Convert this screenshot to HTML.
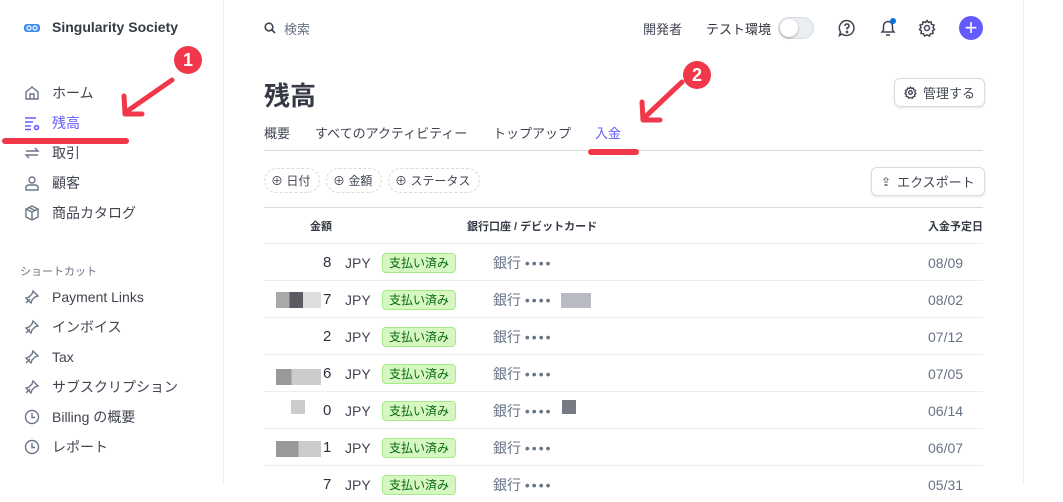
<!DOCTYPE html>
<html><head><meta charset="utf-8"><style>
*{margin:0;padding:0;box-sizing:border-box}
body{width:1063px;height:485px;overflow:hidden;background:#fff;font-family:"Liberation Sans","Noto Sans CJK JP",sans-serif;color:#30313d;position:relative}
.abs{position:absolute}
.side{left:0;top:0;width:224px;height:485px;border-right:1px solid #ebeef1}
.nav{position:absolute;left:24px;font-size:14px;display:flex;align-items:center;gap:12px;color:#414552;height:16px;line-height:16px}
.nav svg{width:16px;height:16px;flex:none}
.t{position:absolute;font-size:14px;color:#414552;white-space:nowrap}
.chip{position:absolute;top:168px;height:25px;border:1px dashed #d5dbe1;border-radius:13px;font-size:12px;color:#414552;display:flex;align-items:center;padding:0 9px 0 6px;gap:5px}
.btn{position:absolute;border:1px solid #d5dbe1;border-radius:6px;box-shadow:0 1px 2px rgba(0,0,0,.1);font-size:13px;display:flex;align-items:center;gap:6px;padding:0 9px;height:29px;color:#414552}
.row{position:absolute;left:264px;width:719px;height:37px;border-top:1px solid #ebeef1;font-size:14px;color:#414552}
.row span{line-height:18px}
.badge{position:absolute;left:118px;top:9px;background:#d7f7c2;border:1px solid #a6eb84;color:#05690d;font-size:12px;border-radius:4px;padding:0 6px;height:20px;line-height:18px!important}
.gray{position:absolute}
.dots{letter-spacing:2px}
</style></head><body>
<div class="abs side"></div>
<svg class="abs" style="left:24px;top:23px" width="16" height="10" viewBox="0 0 16 10"><rect x="0" y="1" width="16" height="8" rx="3" fill="#3d8ef0"/><circle cx="5" cy="5" r="2" fill="none" stroke="#fff" stroke-width="1.2"/><circle cx="11" cy="5" r="2" fill="none" stroke="#fff" stroke-width="1.2"/></svg>
<div class="t" style="left:52px;top:19px;font-weight:bold;color:#353a44;font-size:14px">Singularity Society</div>

<div class="nav" style="top:85px"><svg viewBox="0 0 16 16" fill="none" stroke="#6c7688" stroke-width="1.4"><path d="M2 7 L8 2 L14 7 V14 H2Z M6 14 V9 H10 V14"/></svg>ホーム</div>
<div class="nav" style="top:115px;color:#635bff"><svg viewBox="0 0 16 16" fill="none" stroke="#635bff" stroke-width="1.5"><path d="M1 3H12M1 7H9M1 11H7M1 14.5H7"/><circle cx="12.5" cy="12.5" r="2"/></svg>残高</div>
<div class="nav" style="top:145px"><svg viewBox="0 0 16 16" fill="none" stroke="#6c7688" stroke-width="1.4"><path d="M2 6H14L11 3M14 10H2L5 13"/></svg>取引</div>
<div class="nav" style="top:175px"><svg viewBox="0 0 16 16" fill="none" stroke="#6c7688" stroke-width="1.4"><circle cx="8" cy="5" r="3"/><path d="M2 15V13Q2 10 5 10H11Q14 10 14 13V15Z"/></svg>顧客</div>
<div class="nav" style="top:205px"><svg viewBox="0 0 16 16" fill="none" stroke="#6c7688" stroke-width="1.4"><path d="M8 1L14 4V12L8 15L2 12V4Z M2 4L8 7L14 4M8 7V15M5 2.5L11 5.5"/></svg>商品カタログ</div>
<div class="t" style="left:20px;top:263px;font-size:11px;color:#687385">ショートカット</div>
<div class="nav" style="top:289px"><svg viewBox="0 0 16 16" fill="none" stroke="#6c7688" stroke-width="1.4"><path d="M2 14L6 10M9 2L14 7L11 8L8 11L7 14L2 9L5 8L8 5Z"/></svg>Payment Links</div>
<div class="nav" style="top:319px"><svg viewBox="0 0 16 16" fill="none" stroke="#6c7688" stroke-width="1.4"><path d="M2 14L6 10M9 2L14 7L11 8L8 11L7 14L2 9L5 8L8 5Z"/></svg>インボイス</div>
<div class="nav" style="top:349px"><svg viewBox="0 0 16 16" fill="none" stroke="#6c7688" stroke-width="1.4"><path d="M2 14L6 10M9 2L14 7L11 8L8 11L7 14L2 9L5 8L8 5Z"/></svg>Tax</div>
<div class="nav" style="top:379px"><svg viewBox="0 0 16 16" fill="none" stroke="#6c7688" stroke-width="1.4"><path d="M2 14L6 10M9 2L14 7L11 8L8 11L7 14L2 9L5 8L8 5Z"/></svg>サブスクリプション</div>
<div class="nav" style="top:409px"><svg viewBox="0 0 16 16" fill="none" stroke="#6c7688" stroke-width="1.4"><circle cx="8" cy="8" r="6.5"/><path d="M8 4V8.5H11"/></svg>Billing の概要</div>
<div class="nav" style="top:439px"><svg viewBox="0 0 16 16" fill="none" stroke="#6c7688" stroke-width="1.4"><circle cx="8" cy="8" r="6.5"/><path d="M8 4V8.5H11"/></svg>レポート</div>

<div class="abs" style="left:2px;top:138px;width:127px;height:6px;border-radius:3px;background:#f0384a"></div>
<div class="abs" style="left:174px;top:46px;width:28px;height:28px;border-radius:50%;background:#f0384a;color:#fff;font-weight:bold;font-size:18px;text-align:center;line-height:28px">1</div>
<svg class="abs" style="left:118px;top:76px" width="60" height="45"><path d="M54 4L8 36M6 20L7 38L24 38" fill="none" stroke="#f0384a" stroke-width="5" stroke-linecap="round" stroke-linejoin="round"/></svg>

<svg class="abs" style="left:264px;top:22px" width="12" height="12" viewBox="0 0 12 12" fill="none" stroke="#414552" stroke-width="1.6"><circle cx="5" cy="5" r="3.8"/><path d="M8 8L11 11"/></svg>
<div class="t" style="left:284px;top:19px;font-size:13px;color:#687385">検索</div>
<div class="t" style="left:643px;top:19px;font-size:13px">開発者</div>
<div class="t" style="left:706px;top:19px;font-size:13px;color:#30313d">テスト環境</div>
<div class="abs" style="left:778px;top:17px;width:36px;height:22px;border-radius:11px;background:#ebeef1;border:1px solid #d5dbe1"><div style="position:absolute;left:1px;top:1px;width:18px;height:18px;border-radius:50%;background:#fff;box-shadow:0 1px 2px rgba(0,0,0,.3)"></div></div>
<svg class="abs" style="left:838px;top:19px" width="18" height="18" viewBox="0 0 18 18" fill="none" stroke="#414552" stroke-width="1.5"><path d="M9 1.5A7.5 7.5 0 1 1 4 15L1.5 16.5L2.5 13A7.5 7.5 0 0 1 9 1.5Z"/><path d="M7 7Q7 5 9 5Q11 5 11 7Q11 8.5 9 9V10.5"/><circle cx="9" cy="13" r=".6" fill="#414552"/></svg>
<svg class="abs" style="left:879px;top:18px" width="18" height="20" viewBox="0 0 18 20" fill="none" stroke="#414552" stroke-width="1.5"><path d="M3 14H15L13.5 12V8A4.5 4.5 0 0 0 4.5 8V12Z M7 17H11"/></svg>
<div class="abs" style="left:890px;top:18px;width:6px;height:6px;border-radius:50%;background:#0570de"></div>
<svg class="abs" style="left:918px;top:19px" width="18" height="18" viewBox="0 0 18 18" fill="none" stroke="#414552" stroke-width="1.5"><circle cx="9" cy="9" r="2.5"/><path d="M9 1.5L10.5 3.5L13 2.8L13.5 5.3L16 6L15 8.5L16.5 10.5L14.5 12L15 14.5L12.5 14.8L11.5 17L9 15.8L6.5 17L5.5 14.8L3 14.5L3.5 12L1.5 10.5L3 8.5L2 6L4.5 5.3L5 2.8L7.5 3.5Z"/></svg>
<div class="abs" style="left:959px;top:16px;width:24px;height:24px;border-radius:50%;background:#635bff;color:#fff;font-size:22px;line-height:23px;text-align:center">+</div>
<div class="abs" style="left:1023px;top:0;width:1px;height:485px;background:#ebeef1"></div>

<div class="t" style="left:264px;top:76px;font-size:26px;font-weight:bold;color:#353a44">残高</div>
<div class="btn" style="left:894px;top:78px"><svg width="13" height="13" viewBox="0 0 18 18" fill="none" stroke="#414552" stroke-width="1.8"><circle cx="9" cy="9" r="2.5"/><path d="M9 1.5L10.5 3.5L13 2.8L13.5 5.3L16 6L15 8.5L16.5 10.5L14.5 12L15 14.5L12.5 14.8L11.5 17L9 15.8L6.5 17L5.5 14.8L3 14.5L3.5 12L1.5 10.5L3 8.5L2 6L4.5 5.3L5 2.8L7.5 3.5Z"/></svg>管理する</div>
<div class="t" style="left:264px;top:123px;font-size:13px">概要</div>
<div class="t" style="left:315px;top:123px;font-size:13px">すべてのアクティビティー</div>
<div class="t" style="left:493px;top:123px;font-size:13px">トップアップ</div>
<div class="t" style="left:595px;top:123px;font-size:13px;color:#635bff">入金</div>
<div class="abs" style="left:264px;top:150px;width:719px;height:1px;background:#d5dbe1"></div>
<div class="abs" style="left:588px;top:149px;width:51px;height:6px;border-radius:3px;background:#f0384a"></div>
<div class="abs" style="left:683px;top:61px;width:28px;height:28px;border-radius:50%;background:#f0384a;color:#fff;font-weight:bold;font-size:18px;text-align:center;line-height:28px">2</div>
<svg class="abs" style="left:632px;top:76px" width="60" height="50"><path d="M50 6L12 42M10 26L11 44L28 44" fill="none" stroke="#f0384a" stroke-width="5" stroke-linecap="round" stroke-linejoin="round"/></svg>

<div class="chip" style="left:264px">⊕ 日付</div>
<div class="chip" style="left:326px">⊕ 金額</div>
<div class="chip" style="left:388px">⊕ ステータス</div>
<div class="btn" style="left:871px;top:167px;height:29px"><span style="font-size:12px">⇪</span>エクスポート</div>
<div class="abs" style="left:264px;top:207px;width:719px;height:1px;background:#d5dbe1"></div>
<div class="t" style="left:310px;top:218px;font-size:11px;font-weight:bold;color:#353a44">金額</div>
<div class="t" style="left:467px;top:218px;font-size:11px;font-weight:bold;color:#353a44">銀行口座 / デビットカード</div>
<div class="t" style="left:928px;top:218px;font-size:11px;font-weight:bold;color:#353a44">入金予定日</div>

<div class="row" style="top:243px"><span class="abs" style="left:59px;top:10px;font-size:15px;color:#30313d">8</span><span class="abs" style="left:81px;top:10px">JPY</span><span class="badge">支払い済み</span><span class="abs" style="left:229px;top:10px;color:#687385">銀行 <span class="dots">••••</span></span><span class="abs" style="left:664px;top:10px;color:#687385">08/09</span></div>
<div class="row" style="top:280px"><span class="gray" style="left:12px;top:11px;width:45px;height:16px;background:linear-gradient(90deg,#aaa 30%,#5a5c62 30% 60%,#ddd 60%)"></span><span class="abs" style="left:59px;top:10px;font-size:15px;color:#30313d">7</span><span class="abs" style="left:81px;top:10px">JPY</span><span class="badge">支払い済み</span><span class="abs" style="left:229px;top:10px;color:#687385">銀行 <span class="dots">••••</span></span><span class="gray" style="left:297px;top:12px;width:30px;height:15px;background:#b8bbc2"></span><span class="abs" style="left:664px;top:10px;color:#687385">08/02</span></div>
<div class="row" style="top:317px"><span class="abs" style="left:59px;top:10px;font-size:15px;color:#30313d">2</span><span class="abs" style="left:81px;top:10px">JPY</span><span class="badge">支払い済み</span><span class="abs" style="left:229px;top:10px;color:#687385">銀行 <span class="dots">••••</span></span><span class="abs" style="left:664px;top:10px;color:#687385">07/12</span></div>
<div class="row" style="top:354px"><span class="gray" style="left:12px;top:14px;width:45px;height:16px;background:linear-gradient(90deg,#999 35%,#ccc 35%)"></span><span class="abs" style="left:59px;top:10px;font-size:15px;color:#30313d">6</span><span class="abs" style="left:81px;top:10px">JPY</span><span class="badge">支払い済み</span><span class="abs" style="left:229px;top:10px;color:#687385">銀行 <span class="dots">••••</span></span><span class="abs" style="left:664px;top:10px;color:#687385">07/05</span></div>
<div class="row" style="top:391px"><span class="gray" style="left:27px;top:8px;width:14px;height:14px;background:#ccc"></span><span class="abs" style="left:59px;top:10px;font-size:15px;color:#30313d">0</span><span class="abs" style="left:81px;top:10px">JPY</span><span class="badge">支払い済み</span><span class="abs" style="left:229px;top:10px;color:#687385">銀行 <span class="dots">••••</span></span><span class="gray" style="left:298px;top:8px;width:14px;height:14px;background:#777a82"></span><span class="abs" style="left:664px;top:10px;color:#687385">06/14</span></div>
<div class="row" style="top:428px"><span class="gray" style="left:12px;top:12px;width:45px;height:16px;background:linear-gradient(90deg,#999 50%,#ccc 50%)"></span><span class="abs" style="left:59px;top:10px;font-size:15px;color:#30313d">1</span><span class="abs" style="left:81px;top:10px">JPY</span><span class="badge">支払い済み</span><span class="abs" style="left:229px;top:10px;color:#687385">銀行 <span class="dots">••••</span></span><span class="abs" style="left:664px;top:10px;color:#687385">06/07</span></div>
<div class="row" style="top:465px"><span class="abs" style="left:59px;top:10px;font-size:15px;color:#30313d">7</span><span class="abs" style="left:81px;top:10px">JPY</span><span class="badge">支払い済み</span><span class="abs" style="left:229px;top:10px;color:#687385">銀行 <span class="dots">••••</span></span><span class="abs" style="left:664px;top:10px;color:#687385">05/31</span></div>
</body></html>
